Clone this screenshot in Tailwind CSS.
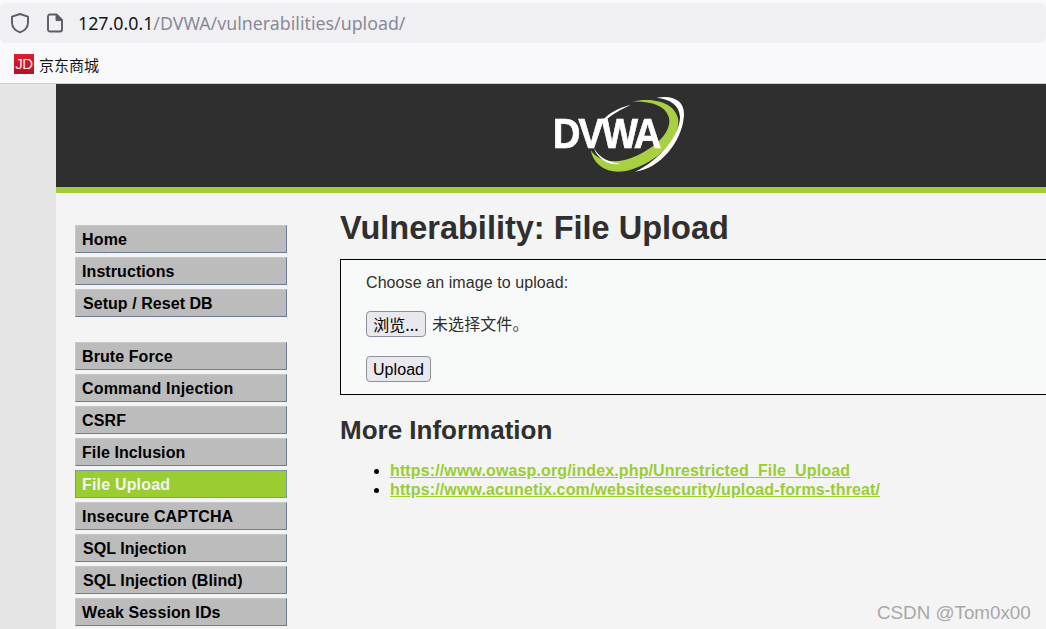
<!DOCTYPE html>
<html lang="zh">
<head>
<meta charset="utf-8">
<title>DVWA</title>
<script src="https://cdn.jsdelivr.net/npm/@tailwindcss/browser@4"></script>
</head>
<body class="m-0 overflow-hidden bg-[#f9f9fb]">
<div class="relative w-[1046px] h-[629px] overflow-hidden flex flex-col font-['Liberation_Sans',sans-serif]">
  <!-- browser chrome -->
  <div class="h-[84px] shrink-0 bg-[#f9f9fb] border-b border-[#cfcfd3] pt-[3px]">
    <div class="h-[40px] bg-[#f0f0f4] rounded-[6px] flex items-center pl-[10px]">
      <svg width="20" height="22" viewBox="0 0 20 22" fill="none" stroke="#5b5b66" stroke-width="1.9" class="shrink-0"><path d="M10 2 L18 4.6 V10.5 C18 15.5 14.5 18.8 10 20.3 C5.5 18.8 2 15.5 2 10.5 V4.6 Z" stroke-linejoin="round"/></svg>
      <svg width="16" height="20" viewBox="0 0 16 20" fill="none" stroke="#5b5b66" stroke-width="1.9" class="shrink-0 ml-[17px]"><path d="M3 1.5 H9.5 L15 7 V16.5 A2 2 0 0 1 13 18.5 H3 A2 2 0 0 1 1 16.5 V3.5 A2 2 0 0 1 3 1.5 Z" stroke-linejoin="round"/><path d="M9.5 1.5 V7 H15" fill="#5b5b66" stroke-linejoin="round"/></svg>
      <div class="ml-[15px] text-[17.8px] leading-[24px] font-['Noto_Sans',sans-serif] text-[#8a8a94] whitespace-nowrap"><span class="text-[#15141a]">127.0.0.1</span>/DVWA/vulnerabilities/upload/</div>
    </div>
    <div class="h-[40px] flex items-center pl-[14px] pt-[3px]">
      <div class="w-[20px] h-[20px] bg-gradient-to-b from-[#d8202f] to-[#b80f26] text-white/90 text-[15px] leading-[20px] text-center tracking-[-0.5px] -mt-[1px]">JD</div>
      <span class="ml-[5px] text-[15px] leading-[20px] text-[#15141a] font-['Noto_Sans_CJK_SC',sans-serif]">京东商城</span>
    </div>
  </div>
  <!-- page -->
  <div class="flex-1 flex bg-[#e5e5e5] min-h-0">
    <div class="w-[56px] shrink-0"></div>
    <div class="flex-1 min-w-0 flex flex-col bg-[#f4f4f4] text-[#2f2f2f]">
      <header class="h-[109px] shrink-0 bg-[#2f2f2f] border-b-[6px] border-[#a2cd3a] pl-[464px] pt-[1px]">
        <svg width="200" height="102" viewBox="0 0 600 306" class="block blur-[0.4px]">
          <path d="M335 50 C400 36 462 52 474 100 C484 155 420 228 330 255 C270 272 222 245 212 195 C232 228 285 242 350 212 C415 182 458 135 446 95 C434 62 395 48 335 50 Z" fill="#a9d040"/>
          <path d="M410 38 C470 28 498 55 491 100 C484 170 420 252 345 260 C420 225 480 150 480 95 C478 60 450 42 410 38 Z" fill="#ffffff"/>
          <path d="M332 60 C280 72 238 100 220 155 C240 108 285 82 332 60 Z" fill="#ffffff"/>
          <path d="M222 190 C240 222 270 232 302 237 C270 242 232 225 222 190 Z" fill="#ffffff"/>
          <text transform="translate(98 190) scale(0.9 1)" class="font-['Liberation_Sans',sans-serif] font-bold" font-size="128" letter-spacing="-7" fill="#ffffff" stroke="#ffffff" stroke-width="2">DVWA</text>
        </svg>
      </header>
      <div class="flex flex-1 min-h-0">
        <nav class="w-[212px] ml-[19px] shrink-0 pt-[32px] flex flex-col text-[16px] leading-[28px] font-bold text-black tracking-[0.18px]">
          <div class="flex flex-col gap-[4px]">
            <a class="h-[28px] pl-[6px] pt-[1px] flex items-center bg-[#bcbcbc] border border-[#c8c8c8] border-r-[#6d7b96] border-b-[#6d7b96]">Home</a>
            <a class="h-[28px] pl-[6px] pt-[1px] flex items-center bg-[#bcbcbc] border border-[#c8c8c8] border-r-[#6d7b96] border-b-[#6d7b96] tracking-[0.08px]">Instructions</a>
            <a class="h-[28px] pl-[7px] pt-[1px] flex items-center bg-[#bcbcbc] border border-[#c8c8c8] border-r-[#6d7b96] border-b-[#6d7b96] tracking-[0.05px]">Setup / Reset DB</a>
          </div>
          <div class="flex flex-col gap-[4px] mt-[25px]">
            <a class="h-[28px] pl-[6px] pt-[1px] flex items-center bg-[#bcbcbc] border border-[#c8c8c8] border-r-[#6d7b96] border-b-[#6d7b96] tracking-[0.08px]">Brute Force</a>
            <a class="h-[28px] pl-[6px] pt-[1px] flex items-center bg-[#bcbcbc] border border-[#c8c8c8] border-r-[#6d7b96] border-b-[#6d7b96]">Command Injection</a>
            <a class="h-[28px] pl-[6px] pt-[1px] flex items-center bg-[#bcbcbc] border border-[#c8c8c8] border-r-[#6d7b96] border-b-[#6d7b96]">CSRF</a>
            <a class="h-[28px] pl-[6px] pt-[1px] flex items-center bg-[#bcbcbc] border border-[#c8c8c8] border-r-[#6d7b96] border-b-[#6d7b96] tracking-[0.08px]">File Inclusion</a>
            <a class="h-[28px] pl-[6px] pt-[1px] flex items-center bg-[#9acd32] border border-[#7f93a8] text-[#f4f4f4]">File Upload</a>
            <a class="h-[28px] pl-[6px] pt-[1px] flex items-center bg-[#bcbcbc] border border-[#c8c8c8] border-r-[#6d7b96] border-b-[#6d7b96]">Insecure CAPTCHA</a>
            <a class="h-[28px] pl-[7px] pt-[1px] flex items-center bg-[#bcbcbc] border border-[#c8c8c8] border-r-[#6d7b96] border-b-[#6d7b96] tracking-[0.05px]">SQL Injection</a>
            <a class="h-[28px] pl-[7px] pt-[1px] flex items-center bg-[#bcbcbc] border border-[#c8c8c8] border-r-[#6d7b96] border-b-[#6d7b96] tracking-[0.08px]">SQL Injection (Blind)</a>
            <a class="h-[28px] pl-[6px] pt-[1px] flex items-center bg-[#bcbcbc] border border-[#c8c8c8] border-r-[#6d7b96] border-b-[#6d7b96] tracking-[0.12px]">Weak Session IDs</a>
          </div>
        </nav>
        <main class="ml-[53px] flex-1 min-w-0 pt-[16px]">
          <h1 class="text-[32.5px] leading-[38px] font-bold m-0">Vulnerability: File Upload</h1>
          <div class="mt-[12px] h-[136px] w-[760px] bg-[#f8f9f9] border border-black pl-[25px] pt-[14px] text-[16px] tracking-[0.08px]">
            <div class="leading-[18px]">Choose an image to upload:</div>
            <div class="mt-[19px] h-[26px] flex items-center">
              <button class="h-[26px] w-[60px] pb-[3px] bg-[#e9e9ed] border border-[#8f8f9d] rounded-[4px] text-black text-[16px] font-['Noto_Sans_CJK_SC',sans-serif]">浏览...</button>
              <span class="ml-[6px] pb-[2px] font-['Noto_Sans_CJK_SC',sans-serif] text-[16px]">未选择文件。</span>
            </div>
            <button class="mt-[19px] pt-[1px] block h-[26px] w-[65px] bg-[#e9e9ed] border border-[#8f8f9d] rounded-[4px] text-black text-[16px]">Upload</button>
          </div>
          <h2 class="mt-[20px] text-[26px] leading-[30px] font-bold">More Information</h2>
          <ul class="mt-[16px] pl-[50px] list-disc text-[16px] leading-[19px] font-bold text-[#9acd32] underline marker:text-black tracking-[0.13px]">
            <li>https://www.owasp.org/index.php/Unrestricted_File_Upload</li>
            <li>https://www.acunetix.com/websitesecurity/upload-forms-threat/</li>
          </ul>
        </main>
      </div>
    </div>
  </div>
  <div class="absolute left-[877px] top-[602px] text-[18.8px] leading-[22px] text-[#a8a8a8] whitespace-nowrap">CSDN @Tom0x00</div>
</div>
</body>
</html>
